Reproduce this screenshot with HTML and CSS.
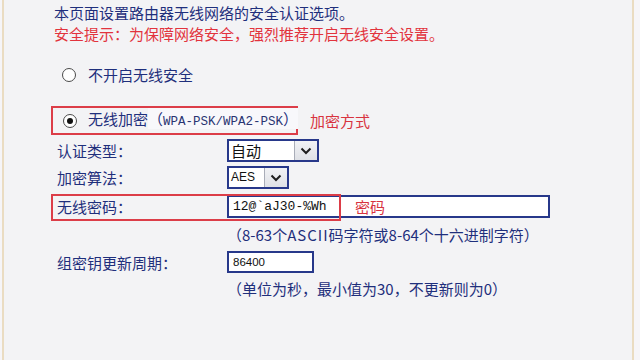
FILE: index.html
```html
<!DOCTYPE html>
<html lang="zh-CN">
<head>
    <meta charset="UTF-8">
    <title>无线安全设置</title>
    <link rel="stylesheet" href="styles.css">
</head>
<body>
    <div class="frame">
        <p class="intro">本页面设置路由器无线网络的安全认证选项。</p>
        <p class="intro warn">安全提示：为保障网络安全，强烈推荐开启无线安全设置。</p>

        <div class="form">
            <!-- Security off -->
            <div class="radio-row plain">
                <span class="radio"></span>
                <span class="radio-text">不开启无线安全</span>
            </div>

            <!-- WPA-PSK / WPA2-PSK -->
            <div class="mode-row">
                <div class="radio-row boxed">
                    <span class="radio checked"></span>
                    <span class="radio-text">无线加密<span class="paren">（<span class="mono">WPA-PSK/WPA2-PSK</span>）</span></span>
                </div>
                <span class="note">加密方式</span>
            </div>

            <div class="field">
                <span class="label">认证类型：</span>
                <div class="select select-auth">
                    <span class="value">自动</span>
                    <span class="arrow"><svg width="12" height="8" viewBox="0 0 12 8"><path d="M1.5 1.5 L6 6 L10.5 1.5" fill="none" stroke="#1e1e1e" stroke-width="2"/></svg></span>
                </div>
            </div>

            <div class="field">
                <span class="label">加密算法：</span>
                <div class="select select-algo">
                    <span class="value small">AES</span>
                    <span class="arrow"><svg width="12" height="8" viewBox="0 0 12 8"><path d="M1.5 1.5 L6 6 L10.5 1.5" fill="none" stroke="#1e1e1e" stroke-width="2"/></svg></span>
                </div>
            </div>

            <div class="field pwd-field">
                <span class="label">无线密码：</span>
                <div class="input input-pwd">12@`aJ30-%Wh</div>
                <div class="mark-box"></div>
                <span class="note pwd-note">密码</span>
            </div>

            <div class="hint">（8-63个<span class="latin">ASCII</span>码字符或8-64个十六进制字符）</div>

            <div class="field period-field">
                <span class="label">组密钥更新周期：</span>
                <div class="input input-period">86400</div>
            </div>

            <div class="hint">（单位为秒，最小值为30，不更新则为0）</div>
        </div>
    </div>
</body>
</html>
```

FILE: styles.css
```css
body {
    margin: 0;
    background-color: #f6f5f8;
    font-family: "Noto Sans CJK SC", "Noto Sans", sans-serif;
    color: #1f2f7c;
}
.frame {
    margin-left: 2px;
    width: 632px;
    height: 360px;
    padding-top: 2px;
    box-sizing: border-box;
    background-color: #f3f3f5;
    border-left: 2px solid #eadcc2;
    border-right: 2px solid #eadcc2;
}
.intro {
    margin: 0 0 0 50px;
    font-size: 15px;
    line-height: 21px;
    color: #1f2f7c;
}
.intro.warn {
    color: #e2333d;
}
.form {
    margin-left: 47px;
}
.radio-row {
    display: flex;
    align-items: center;
    box-sizing: border-box;
}
.radio-row.plain {
    margin-top: 20px;
    height: 22px;
    padding-left: 11px;
}
.radio-row.boxed {
    width: 247px;
    height: 29px;
    padding-left: 10px;
    border: 2px solid #dc3d48;
}
.radio {
    width: 14px;
    height: 14px;
    box-sizing: border-box;
    border: 1px solid #4a4a4a;
    border-radius: 50%;
    background-color: #ffffff;
    display: flex;
    justify-content: center;
    align-items: center;
    flex-shrink: 0;
}
.radio.checked::after {
    content: "";
    width: 6px;
    height: 6px;
    border-radius: 50%;
    background-color: #111111;
}
.radio-text {
    margin-left: 12px;
    font-size: 15px;
    line-height: 20px;
    white-space: nowrap;
}
.boxed .radio-text {
    margin-left: 11px;
}
.paren {
    background-color: #f8f8fb;
}
.mono {
    font-family: "Liberation Mono", monospace;
    font-size: 12.5px;
    color: #2a3572;
}
.mode-row {
    display: flex;
    align-items: center;
    margin-top: 20px;
}
.note {
    font-size: 15px;
    color: #d8333f;
    margin-left: 12px;
}
.field {
    display: flex;
    align-items: center;
    height: 23px;
    margin-top: 4px;
    padding-left: 6px;
}
.label {
    width: 170px;
    font-size: 15px;
    flex-shrink: 0;
}
.select {
    display: flex;
    height: 23px;
    box-sizing: border-box;
    border: 2px solid #27388a;
    background-color: #ffffff;
}
.select-auth {
    width: 92px;
}
.select-algo {
    width: 62px;
}
.value {
    flex: 1;
    padding-left: 2px;
    font-size: 15px;
    line-height: 19px;
    color: #111111;
}
.value.small {
    font-family: "Liberation Sans", sans-serif;
    font-size: 12px;
}
.arrow {
    width: 22px;
    display: flex;
    justify-content: center;
    align-items: center;
    border-left: 1px solid #a9adb8;
    background: linear-gradient(#f1f2f5, #dfe1e6);
}
.input {
    height: 23px;
    box-sizing: border-box;
    border: 2px solid #27388a;
    background-color: #ffffff;
    padding-left: 4px;
    font-family: "Liberation Mono", monospace;
    color: #111111;
    line-height: 19px;
}
.pwd-field {
    position: relative;
    margin-top: 6px;
}
.input-pwd {
    width: 323px;
    font-size: 13px;
}
.mark-box {
    position: absolute;
    left: 0;
    top: -1px;
    width: 290px;
    height: 27px;
    box-sizing: border-box;
    border: 2px solid #dc3d48;
}
.pwd-note {
    position: absolute;
    left: 292px;
    top: 0;
    line-height: 23px;
}
.hint {
    margin-top: 7px;
    margin-left: 176px;
    font-size: 15px;
    line-height: 20px;
    white-space: nowrap;
}
.hint .latin {
    letter-spacing: 1px;
}
.period-field {
    height: 22px;
    margin-top: 6px;
}
.input-period {
    width: 87px;
    height: 22px;
    font-family: "Liberation Sans", sans-serif;
    font-size: 11.5px;
}
.period-field + .hint {
    margin-top: 6px;
}
```
